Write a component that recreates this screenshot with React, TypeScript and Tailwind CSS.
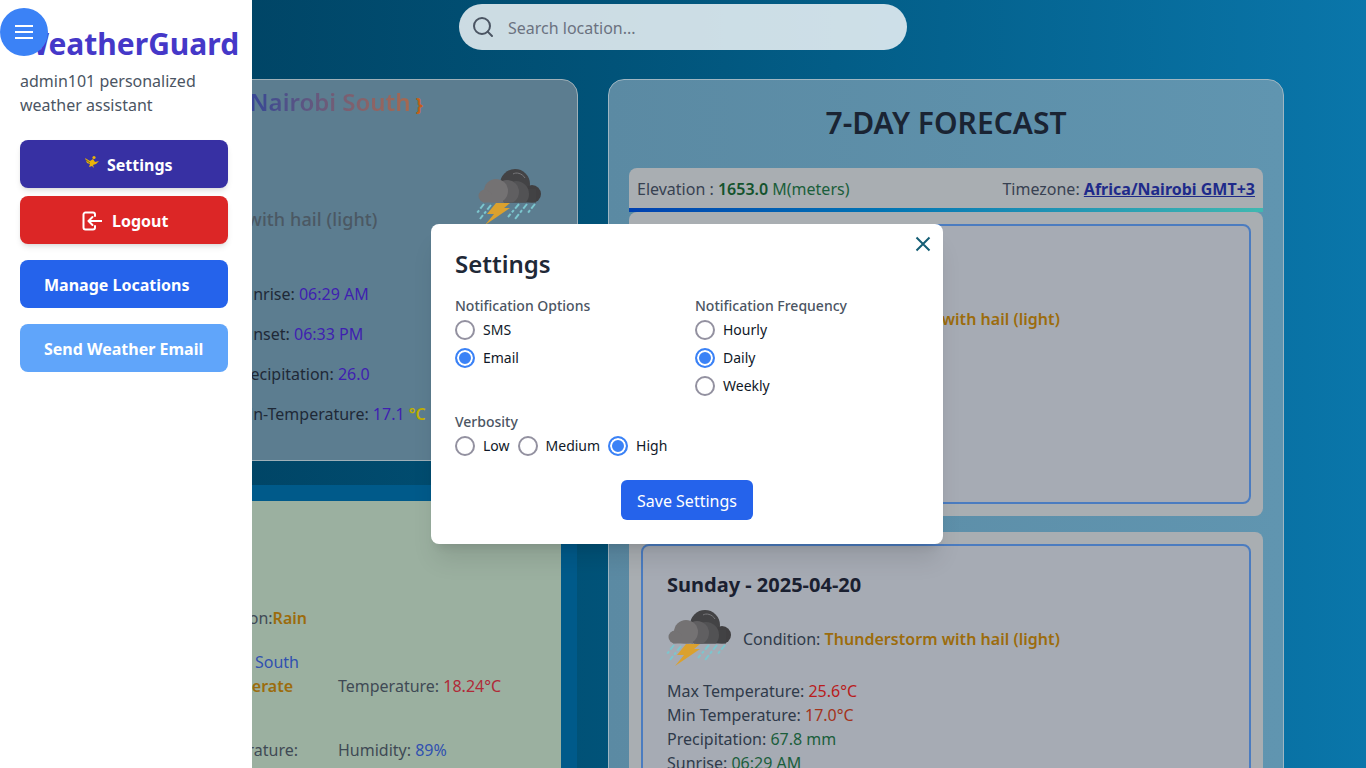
import { useId } from 'react'
import { Search } from 'lucide-react'

function StormIcon({ className }: { className?: string }) {
  const clip = useId()
  return (
    <svg viewBox="0 0 80 70" className={className}>
      <defs>
        <clipPath id={clip}>
          <rect x="0" y="0" width="80" height="43.5" />
        </clipPath>
      </defs>
      <g clipPath={`url(#${clip})`}>
        <circle cx="46" cy="25" r="15" fill="#434345" />
        <circle cx="63" cy="35" r="9" fill="#403f41" />
        <rect x="35" y="30" width="32" height="14" fill="#424244" />
        <circle cx="47" cy="35" r="13" fill="#525254" />
        <circle cx="38" cy="33" r="12" fill="#605f61" />
        <circle cx="27" cy="32" r="12" fill="#747273" />
        <circle cx="16" cy="37" r="6.5" fill="#747273" />
        <rect x="14" y="36" width="20" height="8" fill="#747273" />
      </g>
      <path d="M44 15c3-2 9-1 12 4" stroke="#77777a" strokeWidth="1" fill="none" />
      <g stroke="#7cc6ce" strokeWidth="2" strokeDasharray="6 2 3 2" fill="none">
        <path d="M15 45 L8 54" />
        <path d="M22 46 L11 60" />
        <path d="M50 45 L39 58" />
        <path d="M58 45 L46 60" />
        <path d="M66 45 L58 55" />
      </g>
      <polygon points="27,44 41,44 35,49 41,49 16,66 25,55 18,55" fill="#dba12e" />
    </svg>
  )
}

function SidebarIcon() {
  return (
    <svg viewBox="0 0 16 16" className="w-4 h-4 mr-[7px] -mt-1">
      <circle cx="10" cy="2.5" r="1.6" fill="#eab308" />
      <path d="M1 3l5 3 3-2 2 3 4-1-3 3-3 1 1 3-2-2-3 1 1-3-3-1z" fill="#eab308" />
      <path d="M2 5l4 3" stroke="#7c6a1e" strokeWidth="1" />
    </svg>
  )
}

function LogoutIcon() {
  return (
    <svg viewBox="0 0 20 20" className="w-5 h-5 mr-[10px]" fill="none" stroke="white" strokeWidth="2" strokeLinecap="round" strokeLinejoin="round">
      <path d="M13 5V3.5A2 2 0 0 0 11 1.5H3.5a2 2 0 0 0-2 2v13a2 2 0 0 0 2 2H11a2 2 0 0 0 2-2V15" />
      <path d="M19.5 10H7M10.5 6L6.5 10l4 4" />
    </svg>
  )
}

function Radio({ name, label, checked }: { name: string; label: string; checked?: boolean }) {
  return (
    <label className="flex items-center gap-2 h-7 text-sm text-gray-900">
      <input
        type="radio"
        name={name}
        defaultChecked={checked}
        className="w-5 h-5 appearance-none rounded-full border-2 border-[#9391a0] checked:border-[#3b82f6] checked:bg-[#3b82f6] checked:shadow-[inset_0_0_0_2px_white]"
      />
      {label}
    </label>
  )
}

function DayCard({ title }: { title: string }) {
  return (
    <div className="rounded-lg bg-[#a9aeb2] p-3">
      <div className="h-[280px] rounded-lg border-2 border-[#4b7cc0] bg-[#a6abb4] px-6 pt-[25px] text-[#2f3a4a]">
        <h3 className="text-xl leading-7 font-bold text-[#1a2030]">{title}</h3>
        <div className="flex items-center h-20">
          <StormIcon className="w-[80px] h-[70px] -ml-[8px] mr-1 mb-2" />
          <p className="text-base">
            Condition: <span className="font-semibold tracking-[0.03px] text-[#9c6c0c]">Thunderstorm with hail (light)</span>
          </p>
        </div>
        <div className="text-base leading-6">
          <p>Max Temperature: <span className="text-[#b91c1c]">25.6°C</span></p>
          <p>Min Temperature: <span className="text-[#a3341c]">17.0°C</span></p>
          <p>Precipitation: <span className="text-[#1b5e3b]">67.8 mm</span></p>
          <p>Sunrise: <span className="text-[#1b5e3b]">06:29 AM</span></p>
          <p>Sunset: <span className="text-[#1b5e3b]">06:33 PM</span></p>
        </div>
      </div>
    </div>
  )
}

export default function App() {
  return (
    <div className="relative h-screen overflow-hidden bg-gradient-to-r from-[#003c5a] via-[#015379] via-45% to-[#0a76aa] font-['Noto_Sans',sans-serif]">
      {/* Search */}
      <div className="pt-1 flex justify-center">
        <div className="w-[448px] h-[46px] flex items-center rounded-full bg-white/80 pl-3 pr-4">
          <Search className="w-6 h-6 text-[#4b5563] mr-[13px]" strokeWidth={2} />
          <input
            placeholder="Search location..."
            className="flex-1 bg-transparent pt-[2px] text-base outline-none placeholder:text-[#6b7280]"
          />
        </div>
      </div>

      {/* Main columns */}
      <div className="mt-[29px] flex items-start pl-[162px] gap-[30px]">
        <div className="w-[416px] shrink-0">
          <div className="h-[382px] rounded-2xl border border-[#9fb0b8] bg-[#5c7d90] pl-[71.5px] pt-[6px]">
            <h2 className="text-2xl leading-8 font-semibold whitespace-nowrap -ml-[0.5px]">
              <span className="bg-gradient-to-r from-[#2a3f9a] to-[#a8684e] bg-clip-text text-transparent">{'{ Nairobi South'}</span>
              <span className="inline-block ml-[5px] text-[#c0601a] text-lg font-bold">{'}'}</span>
            </h2>
            <div className="flex h-[164px]">
              <div className="w-[143px] flex justify-end pt-[87px]">
                <p className="text-lg leading-7 font-medium tracking-[0.1px] text-[#4b5863] whitespace-nowrap">Thunderstorm with hail (light)</p>
              </div>
              <StormIcon className="w-[80px] h-[70px] ml-[91.5px] mt-[41px]" />
            </div>
            <div className="space-y-4 text-base leading-6 text-[#1f2937] whitespace-nowrap">
              <p>Sunrise: <span className="text-[#3f1fb0]">06:29 AM</span></p>
              <p>Sunset: <span className="text-[#3f1fb0]">06:33 PM</span></p>
              <p>Precipitation: <span className="text-[#3f1fb0]">26.0</span></p>
              <p>Min-Temperature: <span className="text-[#3f1fb0]">17.1</span> <span className="font-semibold text-[#c0b000]">°C</span></p>
            </div>
          </div>
          <div className="mt-6 w-[415px] bg-[#005a8a] p-4 pb-0">
            <div className="h-[300px] bg-[#9bb0a0] pl-4 pt-[105px] text-base leading-6 text-[#3f4a55] whitespace-nowrap">
              <div className="w-[113px] flex justify-end">
                <p>Condition:<span className="font-semibold text-[#9c6c0c]">Rain</span></p>
              </div>
              <div className="mt-5 w-[105px] flex justify-end">
                <p>Location: <span className="text-[#3050b0]">Nairobi South</span></p>
              </div>
              <div className="flex">
                <div className="w-[144px] flex justify-end pr-[45px]">
                  <p>UV: <span className="font-semibold text-[#9c6c0c]">Moderate</span></p>
                </div>
                <p>Temperature: <span className="text-[#b02a38]">18.24°C</span></p>
              </div>
              <div className="flex mt-10">
                <div className="w-[144px] flex justify-end pr-[40px]">
                  <p>Feels Temperature:</p>
                </div>
                <p>Humidity: <span className="text-[#3050b0]">89%</span></p>
              </div>
            </div>
          </div>
        </div>

        <div className="w-[676px] shrink-0 rounded-2xl border border-[#9fb6c2] bg-gradient-to-r from-[#5b8aa3] to-[#6095b0] px-5 pt-[19px]">
          <h1 className="text-3xl leading-12 font-semibold text-center text-[#1a2433]">7-DAY FORECAST</h1>
          <div className="mt-[21px] h-10 flex items-center justify-between rounded-t-lg bg-[#a9aeb2] pt-[2px] px-2 text-base text-[#374151]">
            <p>Elevation : <span className="font-semibold text-[#14532d]">1653.0</span> <span className="text-[#1b5e3b]">M(meters)</span></p>
            <p>Timezone: <span className="font-bold text-[#1e2a8a] underline">Africa/Nairobi GMT+3</span></p>
          </div>
          <div className="h-1 bg-gradient-to-r from-[#0040b0] to-[#40b8b0]" />
          <div className="space-y-4">
            <DayCard title="Saturday - 2025-04-19" />
            <DayCard title="Sunday - 2025-04-20" />
          </div>
        </div>
      </div>

      {/* Sidebar */}
      <aside className="absolute inset-y-0 left-0 w-[252px] bg-white p-5 pt-[21px]">
        <h1 className="text-3xl leading-[46px] font-bold text-[#4538c8] whitespace-nowrap">WeatherGuard</h1>
        <p className="mt-[2px] text-base leading-6 text-[#4b5563]">admin101 personalized weather assistant</p>
        <div className="mt-[23px] w-[208px]">
          <button className="w-full h-12 flex items-center pl-[64px] pt-[2px] rounded-lg bg-[#3730a3] text-base font-bold text-white shadow-md">
            <SidebarIcon />
            Settings
          </button>
          <button className="mt-2 w-full h-12 flex items-center pl-[62px] pt-[2px] rounded-lg bg-[#dc2626] text-base font-bold text-white shadow-md">
            <LogoutIcon />
            Logout
          </button>
          <button className="mt-4 w-full h-12 flex items-center pl-6 pt-[2px] rounded-lg bg-[#2563eb] text-base font-bold text-white">
            Manage Locations
          </button>
          <button className="mt-4 w-full h-12 flex items-center pl-6 pt-[2px] rounded-lg bg-[#60a5fa] text-base font-bold text-white">
            Send Weather Email
          </button>
        </div>
      </aside>

      {/* Menu toggle */}
      <button className="absolute left-0 top-2 w-12 h-12 rounded-full bg-[#3b82f6] flex items-center justify-center">
        <svg viewBox="0 0 24 24" className="w-6 h-6" fill="none" stroke="white" strokeWidth="2">
          <path d="M3 6h18M3 12h18M3 18h18" />
        </svg>
      </button>

      {/* Settings modal */}
      <div className="absolute left-[431px] top-[224px] w-[512px] h-[320px] rounded-lg bg-white p-6 shadow-xl">
        <button className="absolute right-3 top-3 text-[#155e75]">
          <svg viewBox="0 0 16 16" className="w-4 h-4" fill="none" stroke="currentColor" strokeWidth="2">
            <path d="M1.5 1.5l13 13M14.5 1.5l-13 13" />
          </svg>
        </button>
        <h2 className="text-2xl leading-8 font-semibold text-[#1f2937]">Settings</h2>
        <div className="mt-4 grid grid-cols-2 gap-4">
          <div>
            <p className="text-sm leading-5 font-medium text-[#4b5563]">Notification Options</p>
            <Radio name="channel" label="SMS" />
            <Radio name="channel" label="Email" checked />
          </div>
          <div>
            <p className="text-sm leading-5 font-medium text-[#4b5563]">Notification Frequency</p>
            <Radio name="freq" label="Hourly" />
            <Radio name="freq" label="Daily" checked />
            <Radio name="freq" label="Weekly" />
          </div>
        </div>
        <p className="mt-3 text-sm leading-5 font-medium text-[#4b5563]">Verbosity</p>
        <div className="flex gap-2">
          <Radio name="verbosity" label="Low" />
          <Radio name="verbosity" label="Medium" />
          <Radio name="verbosity" label="High" checked />
        </div>
        <div className="mt-5 flex justify-center">
          <button className="h-10 px-4 pt-[2px] rounded-md bg-[#2563eb] text-base text-white">Save Settings</button>
        </div>
      </div>
    </div>
  )
}
